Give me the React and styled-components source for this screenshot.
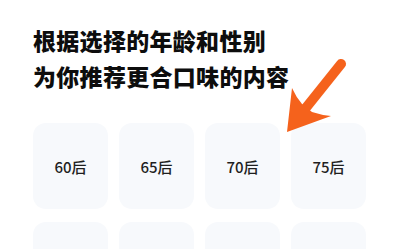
import React from "react";
import styled, { createGlobalStyle } from "styled-components";

const Global = createGlobalStyle`
  html, body { margin: 0; padding: 0; background: #ffffff; }
  body { width: 400px; height: 249px; overflow: hidden; }
`;

const Page = styled.div`
  position: relative;
  width: 400px;
  height: 249px;
  overflow: hidden;
  background: #fff;
  padding: 22px 0 0 33px;
  box-sizing: border-box;
  font-family: "Noto Sans CJK SC", "Noto Sans", sans-serif;
`;

const Title = styled.h1`
  margin: 0;
  font-size: 23px;
  line-height: 36px;
  font-weight: 900;
  color: #0d0d0d;
  letter-spacing: 0.3px;
`;

const Grid = styled.div`
  margin-top: 29px;
  display: grid;
  grid-template-columns: repeat(4, 75px);
  grid-auto-rows: 86px;
  column-gap: 11px;
  row-gap: 13px;
`;

const Card = styled.div`
  border-radius: 13px;
  background: #f7f9fc;
  display: flex;
  align-items: center;
  justify-content: center;
  font-size: 15px;
  font-weight: 500;
  color: #1f1f1f;
`;

const Arrow = styled.svg`
  position: absolute;
  left: 280px;
  top: 55px;
  width: 70px;
  height: 85px;
  overflow: visible;
`;

const ages = ["60后", "65后", "70后", "75后", "80后", "85后", "90后", "95后"];

export default function App() {
  return (
    <Page>
      <Global />
      <Title>
        根据选择的年龄和性别
        <br />
        为你推荐更合口味的内容
      </Title>
      <Grid>
        {ages.map((a, i) => (
          <Card key={a}>{i < 4 ? a : ""}</Card>
        ))}
      </Grid>
      <Arrow viewBox="280 55 70 85">
        <line
          x1="341"
          y1="64"
          x2="305"
          y2="109"
          stroke="#f5621c"
          strokeWidth="10"
          strokeLinecap="round"
        />
        <path
          d="M287 132 L292 88 Q296 97 302 104 L312 112 Q321 115 331 116 Z"
          fill="#f5621c"
        />
      </Arrow>
    </Page>
  );
}
